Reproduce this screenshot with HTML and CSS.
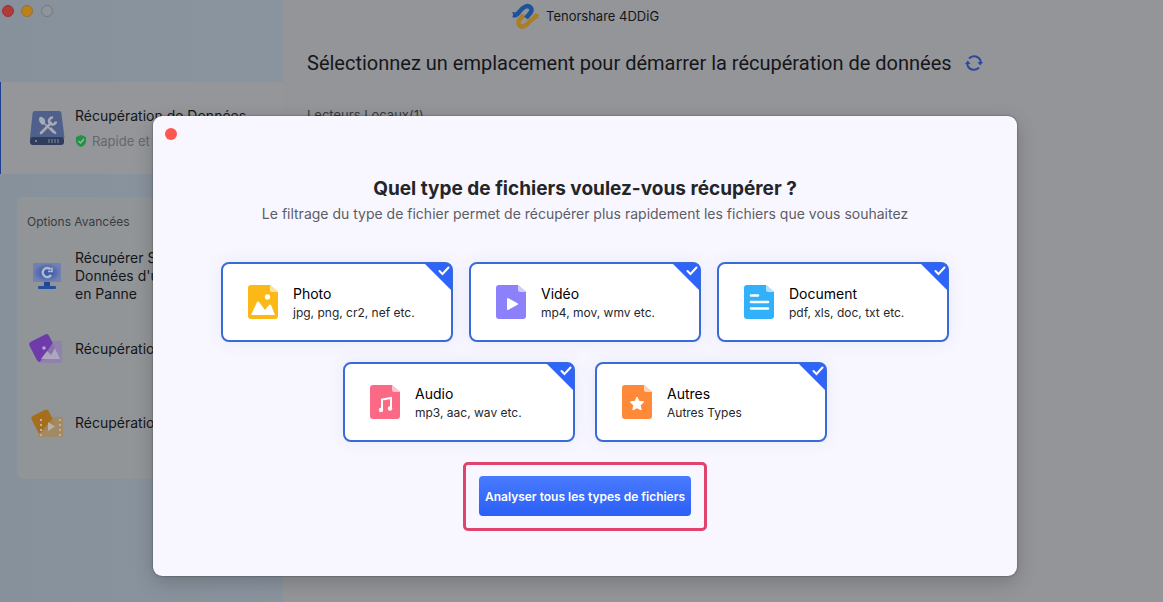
FILE: index.html
```html
<!DOCTYPE html>
<html lang="fr">
<head>
    <meta charset="UTF-8">
    <meta name="viewport" content="width=device-width, initial-scale=1.0">
    <title>Tenorshare 4DDiG</title>
    <link rel="stylesheet" href="styles.css">
</head>
<body>
    <div class="app">
        <aside class="sidebar">
            <div class="window-buttons">
                <button class="dot dot-close" aria-label="Fermer"></button>
                <button class="dot dot-min" aria-label="Réduire"></button>
                <button class="dot dot-max" aria-label="Agrandir"></button>
            </div>

            <a class="nav-main" href="#">
                <svg class="nav-icon" width="36" height="36" viewBox="0 0 36 36">
                    <path d="M6 1h24q2 0 2.400 2L35.500 28H1L3.600 3Q4 1 6 1z" fill="#50608c"/>
                    <rect x="1" y="27" width="34" height="8" rx="3" fill="#2f3c5c"/>
                    <circle cx="7" cy="31" r="1" fill="#8c96ab"/>
                    <path d="M20 29v4M23 29v4M26 29v4M29 29v4" stroke="#7f8ba3" stroke-width="1"/>
                    <path d="M14 12l11 11" stroke="#a7abb6" stroke-width="1.600"/>
                    <path d="M10 9q0-3 3-2 4 2 3 6l-2 2q-4-2-4-6zM20 19l2-2 5 5q1 2-1 2z" fill="#a7abb6"/>
                    <path d="M12 23l10-10" stroke="#a7abb6" stroke-width="2.600" stroke-linecap="round"/>
                    <path d="M24 7.500a3.500 3.500 0 1 0 3 4" fill="none" stroke="#a7abb6" stroke-width="2.600"/>
                </svg>
                <span class="nav-text">
                    <span class="nav-title">Récupération de Données</span>
                    <span class="nav-note">
                        <svg width="12" height="12" viewBox="0 0 12 12"><path d="M6 0l5 2v4q0 4-5 6Q1 10 1 6V2z" fill="#239244"/><path d="M3.500 6l2 2 3.500-4" fill="none" stroke="#a5b5aa" stroke-width="1.400"/></svg>
                        Rapide et Sûr
                    </span>
                </span>
            </a>

            <nav class="options">
                <h2>Options Avancées</h2>
                <a class="option option-tall" href="#">
                    <svg class="nav-icon" width="36" height="36" viewBox="0 0 36 36">
                        <defs>
                            <radialGradient id="screen"><stop offset="0.3" stop-color="#3f5cab"/><stop offset="1" stop-color="#7280b4"/></radialGradient>
                        </defs>
                        <rect x="4" y="5" width="28" height="19" rx="1" fill="url(#screen)"/>
                        <path d="M15 24h6v5h-6z" fill="#244690"/>
                        <rect x="9" y="28" width="18" height="3" rx="1" fill="#24519f"/>
                        <path d="M21.500 11.500a4.500 4.500 0 1 0 .5 5.500" fill="none" stroke="#b1b9cf" stroke-width="2.400"/>
                        <path d="M19 13.500h4v-4" fill="none" stroke="#b1b9cf" stroke-width="1.600"/>
                    </svg>
                    <span>Récupérer Sur<br>Données d'un PC<br>en Panne</span>
                </a>
                <a class="option" href="#">
                    <svg class="nav-icon" width="36" height="36" viewBox="0 0 36 36">
                        <rect x="10" y="10" width="23" height="22" rx="2" fill="#8d7dad"/>
                        <rect x="3" y="6" width="22" height="22" rx="3" transform="rotate(-27 14 17)" fill="#6f3bab"/>
                        <path d="M10 32h23V11l-8-1z" fill="#9284ae" opacity="0.75"/>
                        <path d="M12 28l6-8 4 4 4-7 5 11z" fill="#aea5be"/>
                        <circle cx="15" cy="17" r="1.800" fill="#b7a8cb"/>
                    </svg>
                    <span>Récupération de Photos</span>
                </a>
                <a class="option" href="#">
                    <svg class="nav-icon" width="36" height="36" viewBox="0 0 36 36">
                        <rect x="9" y="12" width="25" height="20" rx="2" fill="#a38a65"/>
                        <rect x="5" y="7" width="19" height="19" rx="3" transform="rotate(-27 14 17)" fill="#a56e1d"/>
                        <path d="M9 30l16-18h7q2 0 2 2v16q0 2-2 2H11q-2 0-2-2z" fill="#a38a65" opacity="0.8"/>
                        <path d="M19 17l7 4.500-7 4.500z" fill="#b9b1a7"/>
                        <path d="M12 14v17M31 14v17" stroke="#b9b1a7" stroke-width="2" stroke-dasharray="2 3"/>
                    </svg>
                    <span>Récupération de Vidéos</span>
                </a>
            </nav>
        </aside>

        <main class="content">
            <header class="titlebar">
                <svg width="28" height="26" viewBox="0 0 28 26" fill="none" stroke-width="4.500">
                    <path d="M25 11c-2 5-5 5-7 7-3 4-8 8-11 4-2-4 2-7 5-10" stroke="#a87e28"/>
                    <path d="M1 12c3 1 5-1 7-4 3-4 8-7 11-3 2 4-2 6-5 10" stroke="#1d539b"/>
                    <path d="M0 9l6 1-3 5z" fill="#1d539b"/>
                    <path d="M26 16l1-5-6 4z" fill="#a87e28"/>
                </svg>
                <span>Tenorshare 4DDiG</span>
            </header>
            <div class="headline">
                <h1>Sélectionnez un emplacement pour démarrer la récupération de données</h1>
                <button class="refresh" aria-label="Actualiser">
                    <svg width="18" height="18" viewBox="0 0 18 18">
                        <path d="M4 4.500A6.800 6.800 0 0 1 15.800 8M14 13.500A6.800 6.800 0 0 1 2.200 10" fill="none" stroke="#2a4a9e" stroke-width="2"/>
                        <path d="M12.500 8H18l-2.800 3.500zM5.500 10H0l2.800-3.500z" fill="#2a4a9e"/>
                    </svg>
                </button>
            </div>
            <p class="drives">Lecteurs Locaux(1)</p>
        </main>
    </div>

    <div class="overlay">
        <section class="modal" role="dialog" aria-labelledby="modalTitle">
            <button class="modal-close" aria-label="Fermer"></button>
            <h2 id="modalTitle">Quel type de fichiers voulez-vous récupérer ?</h2>
            <p class="modal-note">Le filtrage du type de fichier permet de récupérer plus rapidement les fichiers que vous souhaitez</p>

            <div class="types">
                <div class="types-row">
                    <label class="type">
                        <input type="checkbox" checked>
                        <svg class="tick" width="12" height="10" viewBox="0 0 12 10"><path d="M1.500 5l3 3 6-6.500"/></svg>
                        <svg width="30" height="34" viewBox="0 0 30 34">
                            <path d="M3 0h19l8 7v24q0 3-3 3H3q-3 0-3-3V3q0-3 3-3z" fill="#fbb917"/>
                            <path d="M22 0l8 7h-6q-2 0-2-2z" fill="#fde3a0"/>
                            <circle cx="19.500" cy="12" r="2.700" fill="#fff"/>
                            <path d="M3 30l6-13q1-1 2 0l6 8 4-5q1-1 2 0l4 10z" fill="#fff"/>
                        </svg>
                        <span class="type-text"><b>Photo</b><span>jpg, png, cr2, nef etc.</span></span>
                    </label>
                    <label class="type">
                        <input type="checkbox" checked>
                        <svg class="tick" width="12" height="10" viewBox="0 0 12 10"><path d="M1.500 5l3 3 6-6.500"/></svg>
                        <svg width="30" height="34" viewBox="0 0 30 34">
                            <path d="M3 0h19l8 7v24q0 3-3 3H3q-3 0-3-3V3q0-3 3-3z" fill="#8c80fb"/>
                            <path d="M22 0l8 7h-6q-2 0-2-2z" fill="#d2cdfe"/>
                            <path d="M12 14l9 5-9 5z" fill="#fff" stroke="#fff" stroke-width="2" stroke-linejoin="round"/>
                        </svg>
                        <span class="type-text"><b>Vidéo</b><span>mp4, mov, wmv etc.</span></span>
                    </label>
                    <label class="type">
                        <input type="checkbox" checked>
                        <svg class="tick" width="12" height="10" viewBox="0 0 12 10"><path d="M1.500 5l3 3 6-6.500"/></svg>
                        <svg width="30" height="34" viewBox="0 0 30 34">
                            <path d="M3 0h19l8 7v24q0 3-3 3H3q-3 0-3-3V3q0-3 3-3z" fill="#32b1fb"/>
                            <path d="M22 0l8 7h-6q-2 0-2-2z" fill="#b4e2fe"/>
                            <path d="M7 10.500h7M7 17h17M7 23.500h17" stroke="#fff" stroke-width="2.600" stroke-linecap="round"/>
                        </svg>
                        <span class="type-text"><b>Document</b><span>pdf, xls, doc, txt etc.</span></span>
                    </label>
                </div>
                <div class="types-row types-row-last">
                    <label class="type">
                        <input type="checkbox" checked>
                        <svg class="tick" width="12" height="10" viewBox="0 0 12 10"><path d="M1.500 5l3 3 6-6.500"/></svg>
                        <svg width="30" height="34" viewBox="0 0 30 34">
                            <path d="M3 0h19l8 7v24q0 3-3 3H3q-3 0-3-3V3q0-3 3-3z" fill="#fb6985"/>
                            <path d="M22 0l8 7h-6q-2 0-2-2z" fill="#fec6d1"/>
                            <path d="M12 25V14.500l9-1.500v10.500" fill="none" stroke="#fff" stroke-width="2"/>
                            <circle cx="11" cy="25" r="2.200" fill="#fff"/>
                            <circle cx="20" cy="23.500" r="2.200" fill="#fff"/>
                        </svg>
                        <span class="type-text"><b>Audio</b><span>mp3, aac, wav etc.</span></span>
                    </label>
                    <label class="type">
                        <input type="checkbox" checked>
                        <svg class="tick" width="12" height="10" viewBox="0 0 12 10"><path d="M1.500 5l3 3 6-6.500"/></svg>
                        <svg width="30" height="34" viewBox="0 0 30 34">
                            <path d="M3 0h19l8 7v24q0 3-3 3H3q-3 0-3-3V3q0-3 3-3z" fill="#fd8939"/>
                            <path d="M22 0l8 7h-6q-2 0-2-2z" fill="#fed3b6"/>
                            <path d="M15 12l2 4.300 4.700.6-3.400 3.300.8 4.700L15 22.700l-4.100 2.200.8-4.700-3.400-3.300 4.700-.6z" fill="#fff" stroke="#fff" stroke-linejoin="round"/>
                        </svg>
                        <span class="type-text"><b>Autres</b><span>Autres Types</span></span>
                    </label>
                </div>
            </div>

            <div class="highlight">
                <button class="scan">Analyser tous les types de fichiers</button>
            </div>
        </section>
    </div>
</body>
</html>
```
FILE: styles.css
```css
* {
    box-sizing: border-box;
}
body {
    font-family: Inter, "Liberation Sans", sans-serif;
    font-size: 14px;
    margin: 0;
    color: #15161a;
    background-color: #949599;
}
h1, h2, p {
    margin: 0;
}
a {
    color: inherit;
    text-decoration: none;
}
button {
    font-family: inherit;
    border: 0;
    padding: 0;
    background: none;
}
.app {
    display: flex;
    min-height: 100vh;
    overflow: hidden;
}
.sidebar {
    width: 283px;
    flex: none;
    background: linear-gradient(to right, #86919b, #8a949f);
}
.window-buttons {
    display: flex;
    gap: 7px;
    height: 82px;
    padding: 5px 2px;
}
.dot {
    width: 12px;
    height: 12px;
    border-radius: 50%;
}
.dot-close {
    background: #b23a3a;
    border: 1px solid #983336;
}
.dot-min {
    background: #b98120;
    border: 1px solid #9b7128;
}
.dot-max {
    margin-left: 1px;
    background: #8f959b;
    border: 1px solid #747a81;
}
.nav-main {
    display: flex;
    gap: 10px;
    height: 92px;
    padding: 24px 0 0 28px;
    border-left: 1px solid #1d3f93;
    background: #949699;
}
.nav-icon {
    flex: none;
}
.nav-main .nav-icon {
    margin-top: 4px;
}
.nav-text {
    display: flex;
    flex-direction: column;
    gap: 6px;
    white-space: nowrap;
}
.nav-title {
    line-height: 20px;
}
.nav-note {
    display: flex;
    align-items: center;
    gap: 5px;
    font-size: 13px;
    line-height: 18px;
    color: #65676b;
}
.options {
    margin: 23px 12px 0 17px;
    height: 282px;
    padding: 16px 10px;
    border-radius: 6px;
    background: #919598;
}
.options h2 {
    font-size: 12px;
    font-weight: 400;
    line-height: 18px;
    color: #393b3f;
}
.option {
    display: flex;
    align-items: center;
    gap: 10px;
    height: 74px;
    padding-left: 2px;
    line-height: 18px;
    white-space: nowrap;
}
.option-tall {
    height: 78px;
    margin-top: 6px;
    margin-bottom: -3px;
}
.content {
    flex: 1;
    min-width: 0;
    padding-left: 24px;
    background: #949599;
}
.titlebar {
    display: flex;
    align-items: center;
    gap: 6px;
    height: 32px;
    padding-left: 205px;
    font-size: 13px;
}
.headline {
    display: flex;
    align-items: center;
    gap: 13px;
    height: 62px;
}
.headline h1 {
    font-family: Roboto, "Liberation Sans", sans-serif;
    font-size: 20px;
    font-weight: 400;
    white-space: nowrap;
}
.refresh {
    display: flex;
}
.drives {
    margin-top: 12px;
    font-size: 13px;
    line-height: 18px;
    color: #393b3f;
}
.overlay {
    position: absolute;
    inset: 0;
    display: flex;
    padding: 116px 146px 26px 153px;
}
.modal {
    flex: 1;
    display: flex;
    flex-direction: column;
    align-items: center;
    border-radius: 9px;
    background: #f8f7ff;
    box-shadow: 0 0 2px rgba(0, 0, 0, 0.5), 0 6px 20px rgba(0, 0, 0, 0.2);
}
.modal-close {
    align-self: flex-start;
    width: 12px;
    height: 12px;
    margin: 12px 0 0 12px;
    border-radius: 50%;
    background: #fd5750;
}
.modal h2 {
    margin-top: 37px;
    font-size: 19px;
    font-weight: 700;
    line-height: 24px;
    color: #242529;
}
.modal-note {
    margin-top: 3px;
    font-size: 14px;
    line-height: 20px;
    color: #5c5d66;
}
.types {
    display: flex;
    flex-direction: column;
    gap: 20px;
    margin-top: 38px;
}
.types-row {
    display: flex;
    justify-content: center;
    gap: 16px;
}
.types-row-last {
    gap: 20px;
}
.type {
    position: relative;
    display: flex;
    align-items: center;
    gap: 15px;
    width: 232px;
    height: 80px;
    padding-left: 25px;
    border: 2px solid #396bd6;
    border-radius: 8px;
    background: #fff;
    box-shadow: 0 0 16px rgba(90, 110, 230, 0.1);
}
.type input {
    appearance: none;
    position: absolute;
    top: -1px;
    right: -1px;
    width: 28px;
    height: 28px;
    margin: 0;
    border-radius: 0 6px 0 0;
    background: #2f64fb;
    clip-path: polygon(0 0, 100% 0, 100% 100%);
}
.type .tick {
    position: absolute;
    top: 2px;
    right: 1px;
    fill: none;
    stroke: #fff;
    stroke-width: 2;
    stroke-linecap: round;
}
.type-text {
    display: flex;
    flex-direction: column;
    padding-top: 2px;
    font-size: 12px;
    line-height: 18px;
    color: #26272b;
}
.type-text b {
    font-size: 14px;
    font-weight: 400;
    line-height: 20px;
    color: #000;
}
.highlight {
    margin-top: 20px;
    padding: 11px 13px 12px;
    border: 3px solid #e0436b;
    border-radius: 5px;
}
.scan {
    display: block;
    width: 212px;
    height: 40px;
    border-radius: 4px;
    font-size: 12px;
    font-weight: 600;
    white-space: nowrap;
    color: #fff;
    background: linear-gradient(#497bff, #2b5ff6);
}
```
